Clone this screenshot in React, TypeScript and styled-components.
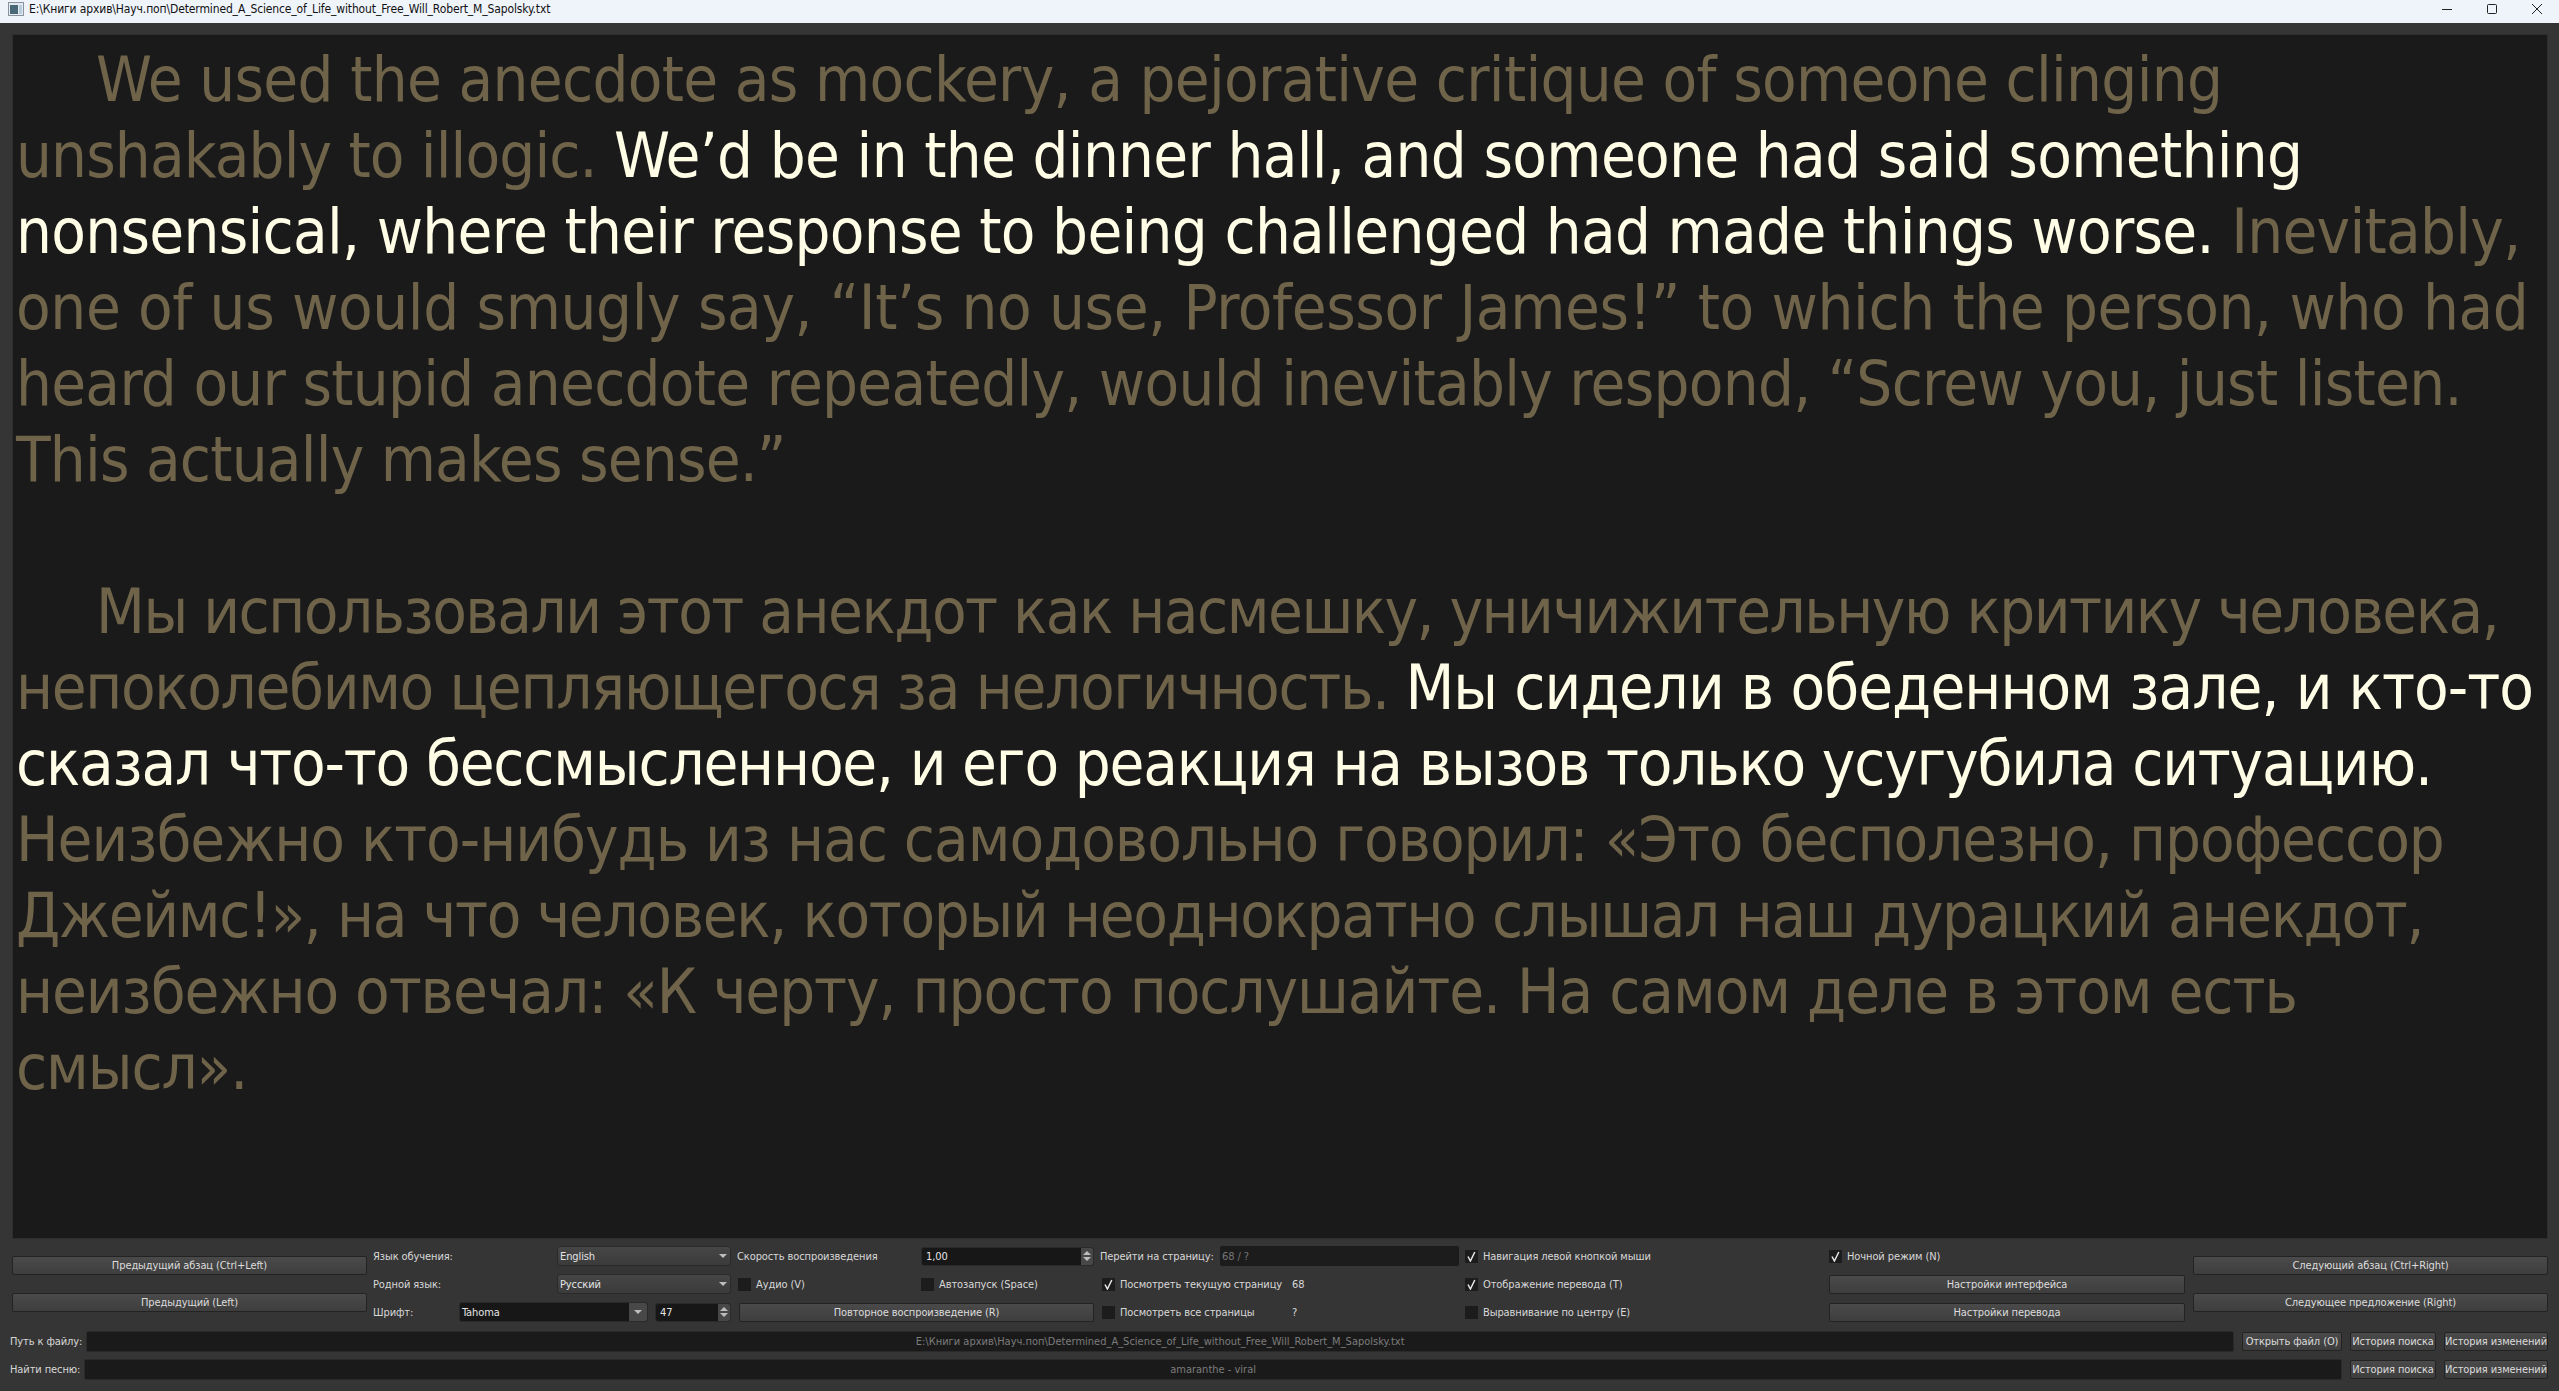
import React from "react";
import styled, { createGlobalStyle } from "styled-components";

const Global = createGlobalStyle`
  html, body { margin: 0; padding: 0; background: #353535; }
  * { box-sizing: border-box; }
`;
const Win = styled.div`
  width: 2559px; height: 1391px; display: flex; flex-direction: column; background: #353535; overflow: hidden;
  font-family: "DejaVu Sans", sans-serif; font-stretch: condensed; font-size: 11px; letter-spacing: -0.1px; color: #d8d8d8;
`;
const TitleBar = styled.div`
  height: 23px; flex: none; background: #eff4fb; display: flex; align-items: center; padding: 0 17px 6px 8px; gap: 5px; color: #111; font-size: 12px; letter-spacing: -0.13px;
`;
const TitleText = styled.span`flex: 1;`;
const WinBtns = styled.div`display: flex; gap: 35px; align-items: center;`;
const Reader = styled.div`
  margin: 11px 11px 0 12px; height: 1205px; flex: none; background: #1a1a1a; border: 1px solid #2e2e2e; padding: 7px 3px 0;
  font-size: 63px; line-height: 76px; color: #6f644a; white-space: nowrap; overflow: hidden;
`;
const Line = styled.div<{ $indent?: boolean; $ls: number }>`
  padding-left: ${(p) => (p.$indent ? "80px" : "0")};
  letter-spacing: ${(p) => p.$ls}px;
`;
const Hi = styled.span<{ $ls?: number }>`
  color: #fffde6;
  ${(p) => (p.$ls !== undefined ? `letter-spacing: ${p.$ls}px;` : "")}
`;
const Gap = styled.div`height: 76px;`;
const Controls = styled.div`
  display: grid; grid-template-columns: 355px 358px 357px 359px 358px 358px 355px; column-gap: 6px; padding: 7px 11px 0 12px; height: 92px; flex: none;
`;
const Col = styled.div`display: grid; grid-template-rows: 20px 20px 20px; row-gap: 8px; align-items: center; align-content: start;`;
const SideCol = styled.div`display: flex; flex-direction: column; gap: 18px; padding-top: 10px;`;
const Btn = styled.div<{ $w?: number; $fill?: boolean }>`
  height: 19px; border: 1px solid #232323; border-radius: 2px; background: linear-gradient(#4a4a4a, #3e3e3e);
  display: flex; align-items: center; justify-content: center; color: #dcdcdc; white-space: nowrap;
  flex: ${(p) => (p.$fill ? 1 : "none")}; margin-left: ${(p) => (p.$fill ? "2px" : 0)};
  width: ${(p) => (p.$w ? p.$w + "px" : "auto")};
`;
const Row = styled.div`display: flex; align-items: center; height: 20px; white-space: nowrap;`;
const Label = styled.span<{ $w?: number }>`flex: none; width: ${(p) => (p.$w ? p.$w + "px" : "auto")};`;
const Combo = styled.div<{ $dark?: boolean; $w?: number }>`
  height: 20px; flex: ${(p) => (p.$w ? "none" : 1)}; width: ${(p) => (p.$w ? p.$w + "px" : "auto")}; border: 1px solid #2a2a2a; border-radius: 3px;
  background: ${(p) => (p.$dark ? "#171717" : "linear-gradient(#464646, #3b3b3b)")}; display: flex; align-items: center; justify-content: space-between; padding-left: 2px; color: #e4e4e4; overflow: hidden;
`;
const Arrow = styled.div<{ $box?: boolean }>`
  width: ${(p) => (p.$box ? "18px" : "auto")}; height: 100%; display: flex; align-items: center; justify-content: center;
  padding-right: ${(p) => (p.$box ? 0 : "3px")}; background: ${(p) => (p.$box ? "#484848" : "transparent")};
  &::after { content: ""; border-left: 4px solid transparent; border-right: 4px solid transparent; border-top: 4px solid #bdbdbd; }
`;
const Spin = styled.div<{ $ml?: number }>`
  height: 19px; flex: 1; margin-left: ${(p) => p.$ml ?? 0}px; overflow: hidden;
  border: 1px solid #2a2a2a; border-radius: 3px; background: #171717; display: flex; align-items: center; justify-content: space-between; padding-left: 4px; color: #e4e4e4;
`;
const SpinBtns = styled.div`
  width: 12px; height: 100%; background: #484848; display: flex; flex-direction: column; align-items: center; justify-content: center; gap: 2px;
  &::before { content: ""; border-left: 4px solid transparent; border-right: 4px solid transparent; border-bottom: 4px solid #bdbdbd; }
  &::after { content: ""; border-left: 4px solid transparent; border-right: 4px solid transparent; border-top: 4px solid #bdbdbd; }
`;
const Box = styled.span`
  width: 13px; height: 13px; flex: none; background: #1c1c1c; display: inline-flex; align-items: center; justify-content: center;
`;
const CheckRow = styled.div<{ $w?: number; $ml?: number }>`
  display: flex; align-items: center; gap: 5px; white-space: nowrap; flex: none; margin-left: ${(p) => p.$ml ?? 0}px;
  width: ${(p) => (p.$w ? p.$w + "px" : "auto")};
`;
const PageInput = styled.div`
  height: 20px; flex: 1; background: #1c1c1c; border-radius: 2px; color: #767676; display: flex; align-items: center; padding-left: 2px;
`;
const Bars = styled.div`display: flex; flex-direction: column; gap: 7px; padding: 0 11px 0 10px;`;
const BarRow = styled.div`display: flex; align-items: center; height: 21px; gap: 8px;`;
const RowLabel = styled.span`flex: none; white-space: nowrap; margin-right: -4px;`;
const Field = styled.div`
  flex: 1; height: 21px; background: #1a1a1a; border: 1px solid #2a2a2a; border-radius: 2px; display: flex; align-items: center; justify-content: center; color: #7c7c7c; letter-spacing: 0;
`;
const SmallBtn = styled(Btn)`padding: 0 2px;`;

const Check = () => (
  <svg width="9" height="11" viewBox="0 0 9 11"><path d="M1 5.5 L3.4 10 L7.8 1" fill="none" stroke="#e8e8e8" strokeWidth="1.5" /></svg>
);
const Cb = ({ on, children, w, ml }: { on?: boolean; children: React.ReactNode; w?: number; ml?: number }) => (
  <CheckRow $w={w} $ml={ml}><Box>{on && <Check />}</Box><span>{children}</span></CheckRow>
);

export default function App() {
  return (
    <Win>
      <Global />
      <TitleBar>
        <svg width="16" height="14" viewBox="0 0 16 14"><rect x="0.5" y="0.5" width="15" height="13" fill="#e4eaf0" stroke="#8a94a0" /><rect x="2" y="3" width="8" height="9" fill="#4a6a78" /><rect x="11" y="3" width="3" height="9" fill="#b8cfe0" /></svg>
        <TitleText>E:\Книги архив\Науч.поп\Determined_A_Science_of_Life_without_Free_Will_Robert_M_Sapolsky.txt</TitleText>
        <WinBtns>
          <svg width="10" height="10" viewBox="0 0 10 10"><path d="M0 5.5H10" stroke="#222" /></svg>
          <svg width="10" height="10" viewBox="0 0 10 10"><rect x="0.5" y="0.5" width="9" height="9" rx="1" fill="none" stroke="#222" /></svg>
          <svg width="10" height="10" viewBox="0 0 10 10"><path d="M0 0L10 10M10 0L0 10" stroke="#222" /></svg>
        </WinBtns>
      </TitleBar>
      <Reader>
        <Line $indent $ls={-0.68}>We used the anecdote as mockery, a pejorative critique of someone clinging</Line>
        <Line $ls={-0.85}>unshakably to illogic. <Hi $ls={-0.68}>We’d be in the dinner hall, and someone had said something</Hi></Line>
        <Line $ls={-0.7}><Hi>nonsensical, where their response to being challenged had made things worse.</Hi> Inevitably,</Line>
        <Line $ls={-0.36}>one of us would smugly say, “It’s no use, Professor James!” to which the person, who had</Line>
        <Line $ls={-0.72}>heard our stupid anecdote repeatedly, would inevitably respond, “Screw you, just listen.</Line>
        <Line $ls={-0.78}>This actually makes sense.”</Line>
        <Gap />
        <Line $indent $ls={-1.5}>Мы использовали этот анекдот как насмешку, уничижительную критику человека,</Line>
        <Line $ls={-1.33}>непоколебимо цепляющегося за нелогичность. <Hi $ls={-0.93}>Мы сидели в обеденном зале, и кто-то</Hi></Line>
        <Line $ls={-1.19}><Hi>сказал что-то бессмысленное, и его реакция на вызов только усугубила ситуацию.</Hi></Line>
        <Line $ls={-1.02}>Неизбежно кто-нибудь из нас самодовольно говорил: «Это бесполезно, профессор</Line>
        <Line $ls={-1.33}>Джеймс!», на что человек, который неоднократно слышал наш дурацкий анекдот,</Line>
        <Line $ls={-1.05}>неизбежно отвечал: «К черту, просто послушайте. На самом деле в этом есть</Line>
        <Line $ls={-1.1}>смысл».</Line>
      </Reader>
      <Controls>
        <SideCol>
          <Btn>Предыдущий абзац (Ctrl+Left)</Btn>
          <Btn>Предыдущий (Left)</Btn>
        </SideCol>
        <Col>
          <Row><Label $w={184}>Язык обучения:</Label><Combo>English<Arrow /></Combo></Row>
          <Row><Label $w={184}>Родной язык:</Label><Combo>Русский<Arrow /></Combo></Row>
          <Row><Label $w={86}>Шрифт:</Label><Combo $dark $w={189}>Tahoma<Arrow $box /></Combo><Spin $ml={7}>47<SpinBtns /></Spin></Row>
        </Col>
        <Col>
          <Row><Label $w={184}>Скорость воспроизведения</Label><Spin>1,00<SpinBtns /></Spin></Row>
          <Row><Cb w={183} ml={1}>Аудио (V)</Cb><Cb>Автозапуск (Space)</Cb></Row>
          <Row><Btn $fill>Повторное воспроизведение (R)</Btn></Row>
        </Col>
        <Col>
          <Row><Label $w={120}>Перейти на страницу:</Label><PageInput>68 / ?</PageInput></Row>
          <Row><Cb on w={190} ml={2}>Посмотреть текущую страницу</Cb>68</Row>
          <Row><Cb w={190} ml={2}>Посмотреть все страницы</Cb>?</Row>
        </Col>
        <Col>
          <Row><Cb on>Навигация левой кнопкой мыши</Cb></Row>
          <Row><Cb on>Отображение перевода (T)</Cb></Row>
          <Row><Cb>Выравнивание по центру (E)</Cb></Row>
        </Col>
        <Col>
          <Row><Cb on>Ночной режим (N)</Cb></Row>
          <Btn $w={356}>Настройки интерфейса</Btn>
          <Btn $w={356}>Настройки перевода</Btn>
        </Col>
        <SideCol>
          <Btn>Следующий абзац (Ctrl+Right)</Btn>
          <Btn>Следующее предложение (Right)</Btn>
        </SideCol>
      </Controls>
      <Bars>
        <BarRow>
          <RowLabel>Путь к файлу:</RowLabel>
          <Field>E:\Книги архив\Науч.поп\Determined_A_Science_of_Life_without_Free_Will_Robert_M_Sapolsky.txt</Field>
          <SmallBtn $w={100}>Открыть файл (O)</SmallBtn>
          <SmallBtn $w={86}>История поиска</SmallBtn>
          <SmallBtn $w={104}>История изменений</SmallBtn>
        </BarRow>
        <BarRow>
          <RowLabel>Найти песню:</RowLabel>
          <Field>amaranthe - viral</Field>
          <SmallBtn $w={86}>История поиска</SmallBtn>
          <SmallBtn $w={104}>История изменений</SmallBtn>
        </BarRow>
      </Bars>
    </Win>
  );
}
